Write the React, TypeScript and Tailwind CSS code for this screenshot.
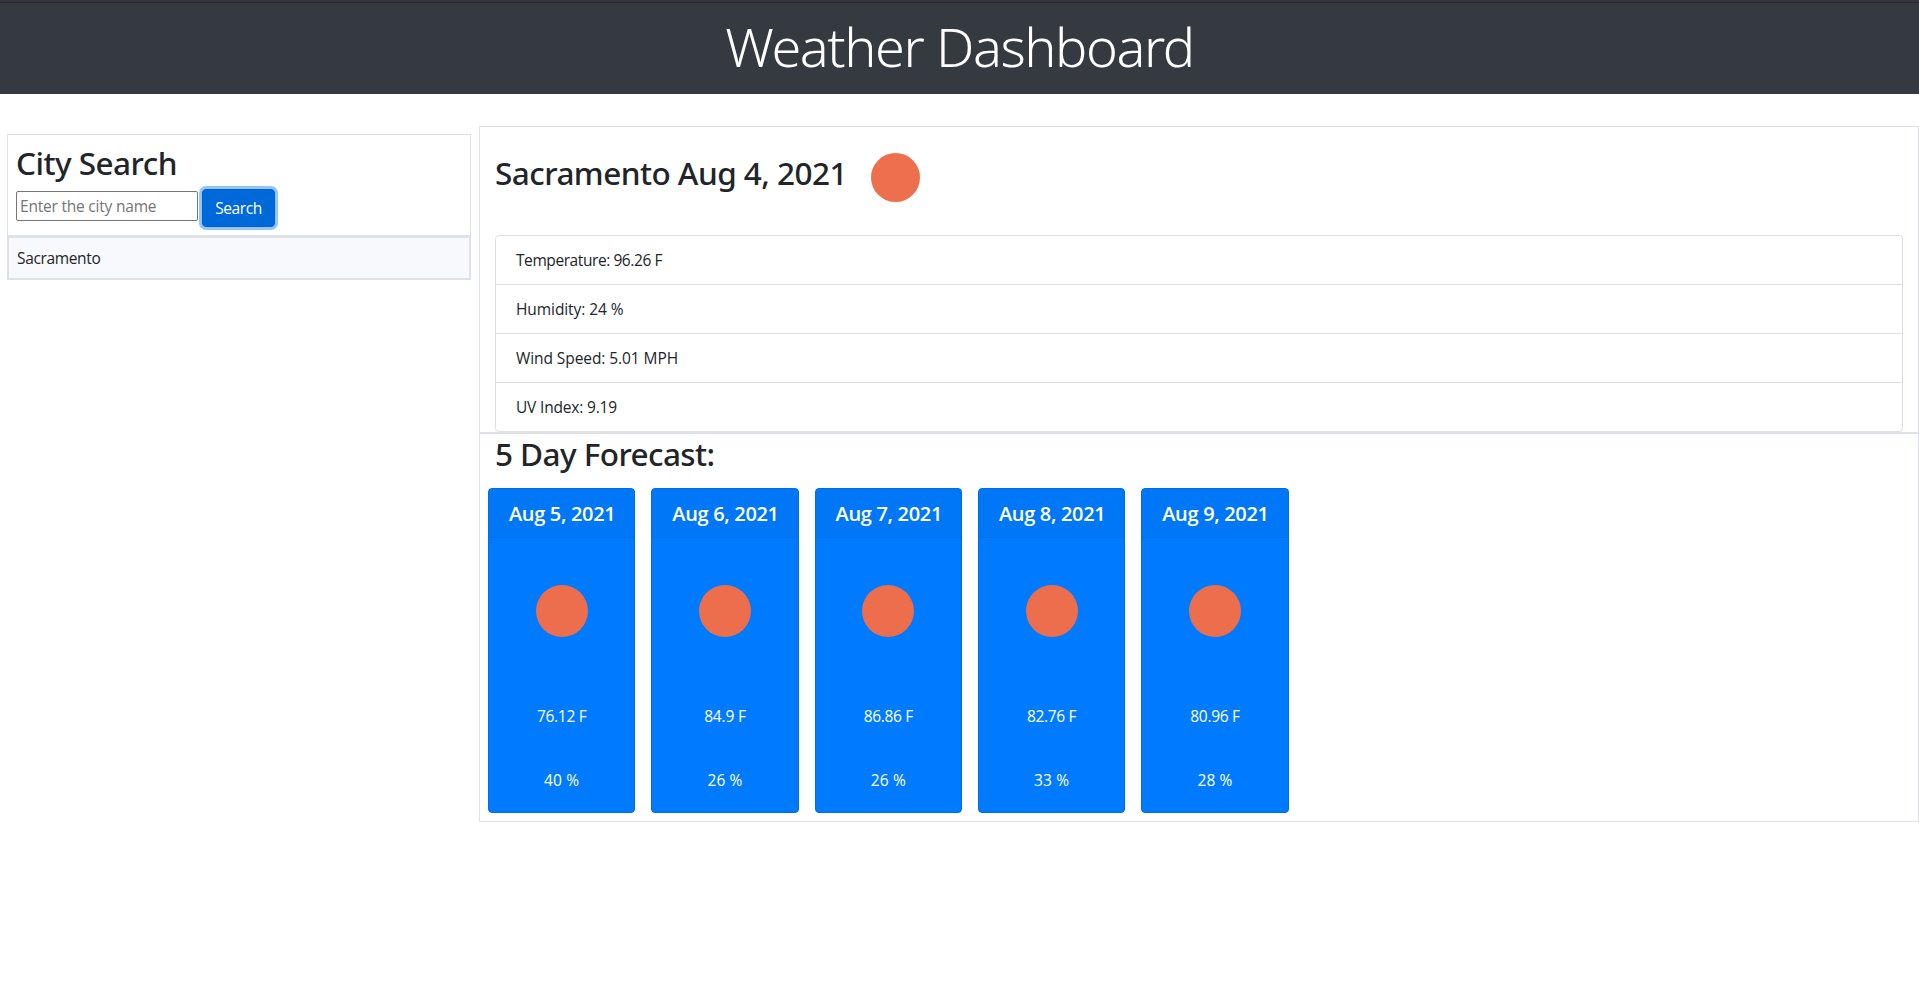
import React from "react";

type Day = {
  date: string;
  temp: string;
  humidity: string;
  tempTracking: string;
};

const conditions = [
  { text: "Temperature: 96.26 F", tracking: "tracking-[-0.42px]" },
  { text: "Humidity: 24 %", tracking: "tracking-[-0.08px]" },
  { text: "Wind Speed: 5.01 MPH", tracking: "tracking-[-0.08px]" },
  { text: "UV Index: 9.19", tracking: "tracking-[-0.18px]" },
];

const days: Day[] = [
  { date: "Aug 5, 2021", temp: "76.12 F", humidity: "40 %", tempTracking: "tracking-[-0.32px]" },
  { date: "Aug 6, 2021", temp: "84.9 F", humidity: "26 %", tempTracking: "tracking-[-0.18px]" },
  { date: "Aug 7, 2021", temp: "86.86 F", humidity: "26 %", tempTracking: "tracking-[-0.32px]" },
  { date: "Aug 8, 2021", temp: "82.76 F", humidity: "33 %", tempTracking: "tracking-[-0.32px]" },
  { date: "Aug 9, 2021", temp: "80.96 F", humidity: "28 %", tempTracking: "tracking-[-0.32px]" },
];

const heading =
  "font-['Noto_Sans',sans-serif] text-[31.5px] leading-[38.4px] font-medium whitespace-nowrap";

function Header() {
  return (
    <header className="h-[94px] border-t-2 border-[#35363a] bg-[#343a40]">
      <div className="flex h-full justify-center border-t border-[#292a2d] pt-[10px]">
        <h1 className="font-['Noto_Sans',sans-serif] text-[54px] leading-[67px] font-light tracking-[-1.42px] whitespace-nowrap text-white">
          Weather Dashboard
        </h1>
      </div>
    </header>
  );
}

function SearchPanel() {
  return (
    <aside className="mt-10 ml-[7px] w-[464px] shrink-0">
      <div className="h-[102px] border border-[#dee2e6] p-2">
        <h2 className={`${heading} h-[47px] pt-px tracking-[-0.53px]`}>City Search</h2>
        <div className="flex items-start">
          <input
            type="text"
            placeholder="Enter the city name"
            className="mt-[1px] h-[30px] w-[182px] rounded-[2px] border border-[#767676] bg-white px-[3px] text-[15.5px] tracking-[-0.21px] outline-none placeholder:text-[#757575]"
          />
          <button className="-mt-[1px] ml-1 h-[38px] w-[73px] rounded-[4px] border border-[#0062cc] bg-[#0069d9] text-center text-[15.5px] leading-6 tracking-[-0.4px] text-white shadow-[0_0_0_3px_#93c5ff]">
            Search
          </button>
        </div>
      </div>
      <div className="h-11 border-2 border-[#dee2e6] bg-[#f8f9fc] px-2 pt-[8px] text-[15.5px] leading-6 tracking-[-0.35px]">
        Sacramento
      </div>
    </aside>
  );
}

function CurrentWeather() {
  return (
    <section className="h-[307px] border border-[#dee2e6] px-[15px]">
      <div className="flex h-[108px]">
        <h2 className={`${heading} w-[352px] pt-[27px] tracking-[-0.53px]`}>
          Sacramento Aug 4, 2021
        </h2>
        <span className="mt-[26px] ml-6 size-[49px] rounded-full bg-[#ee6f4e]" />
      </div>
      <ul className="rounded-[4px] border border-[#dfdfdf]">
        {conditions.map((c) => (
          <li
            key={c.text}
            className={`h-[49px] border-b border-[#dfdfdf] px-5 py-3 text-[15.5px] leading-6 last:h-12 last:border-b-0 ${c.tracking}`}
          >
            {c.text}
          </li>
        ))}
      </ul>
    </section>
  );
}

function DayCard({ day }: { day: Day }) {
  return (
    <article className="h-[325px] w-[147.33px] rounded-[4px] border border-[#006de3] bg-[#007bff] text-center text-white">
      <h3 className="h-[49px] border-b border-[#006fe6] bg-[#0077f7] pt-[13px] pl-px text-[20px] leading-6 font-semibold tracking-[-0.32px]">
        {day.date}
      </h3>
      <div className="mt-5 flex h-[106px] items-center justify-center">
        <span className="size-[52px] rounded-full bg-[#ec6e4c]" />
      </div>
      <p className={`mt-10 text-[15.5px] leading-6 ${day.tempTracking}`}>{day.temp}</p>
      <p className="mt-10 text-[15.5px] leading-6 tracking-[0.15px]">{day.humidity}</p>
    </article>
  );
}

function Forecast() {
  return (
    <section className="h-[389px] border border-[#dee2e6] px-2">
      <h2 className={`${heading} mb-2 ml-[7px] h-[46px] pt-px tracking-[-0.57px]`}>
        5 Day Forecast:
      </h2>
      <div className="flex gap-4">
        {days.map((d) => (
          <DayCard key={d.date} day={d} />
        ))}
      </div>
    </section>
  );
}

export default function App() {
  return (
    <div className="min-h-[1001px] bg-white font-['Open_Sans',sans-serif] text-[#212529]">
      <Header />
      <main className="flex">
        <SearchPanel />
        <div className="mt-8 ml-2 min-w-0 flex-1">
          <CurrentWeather />
          <Forecast />
        </div>
      </main>
    </div>
  );
}
